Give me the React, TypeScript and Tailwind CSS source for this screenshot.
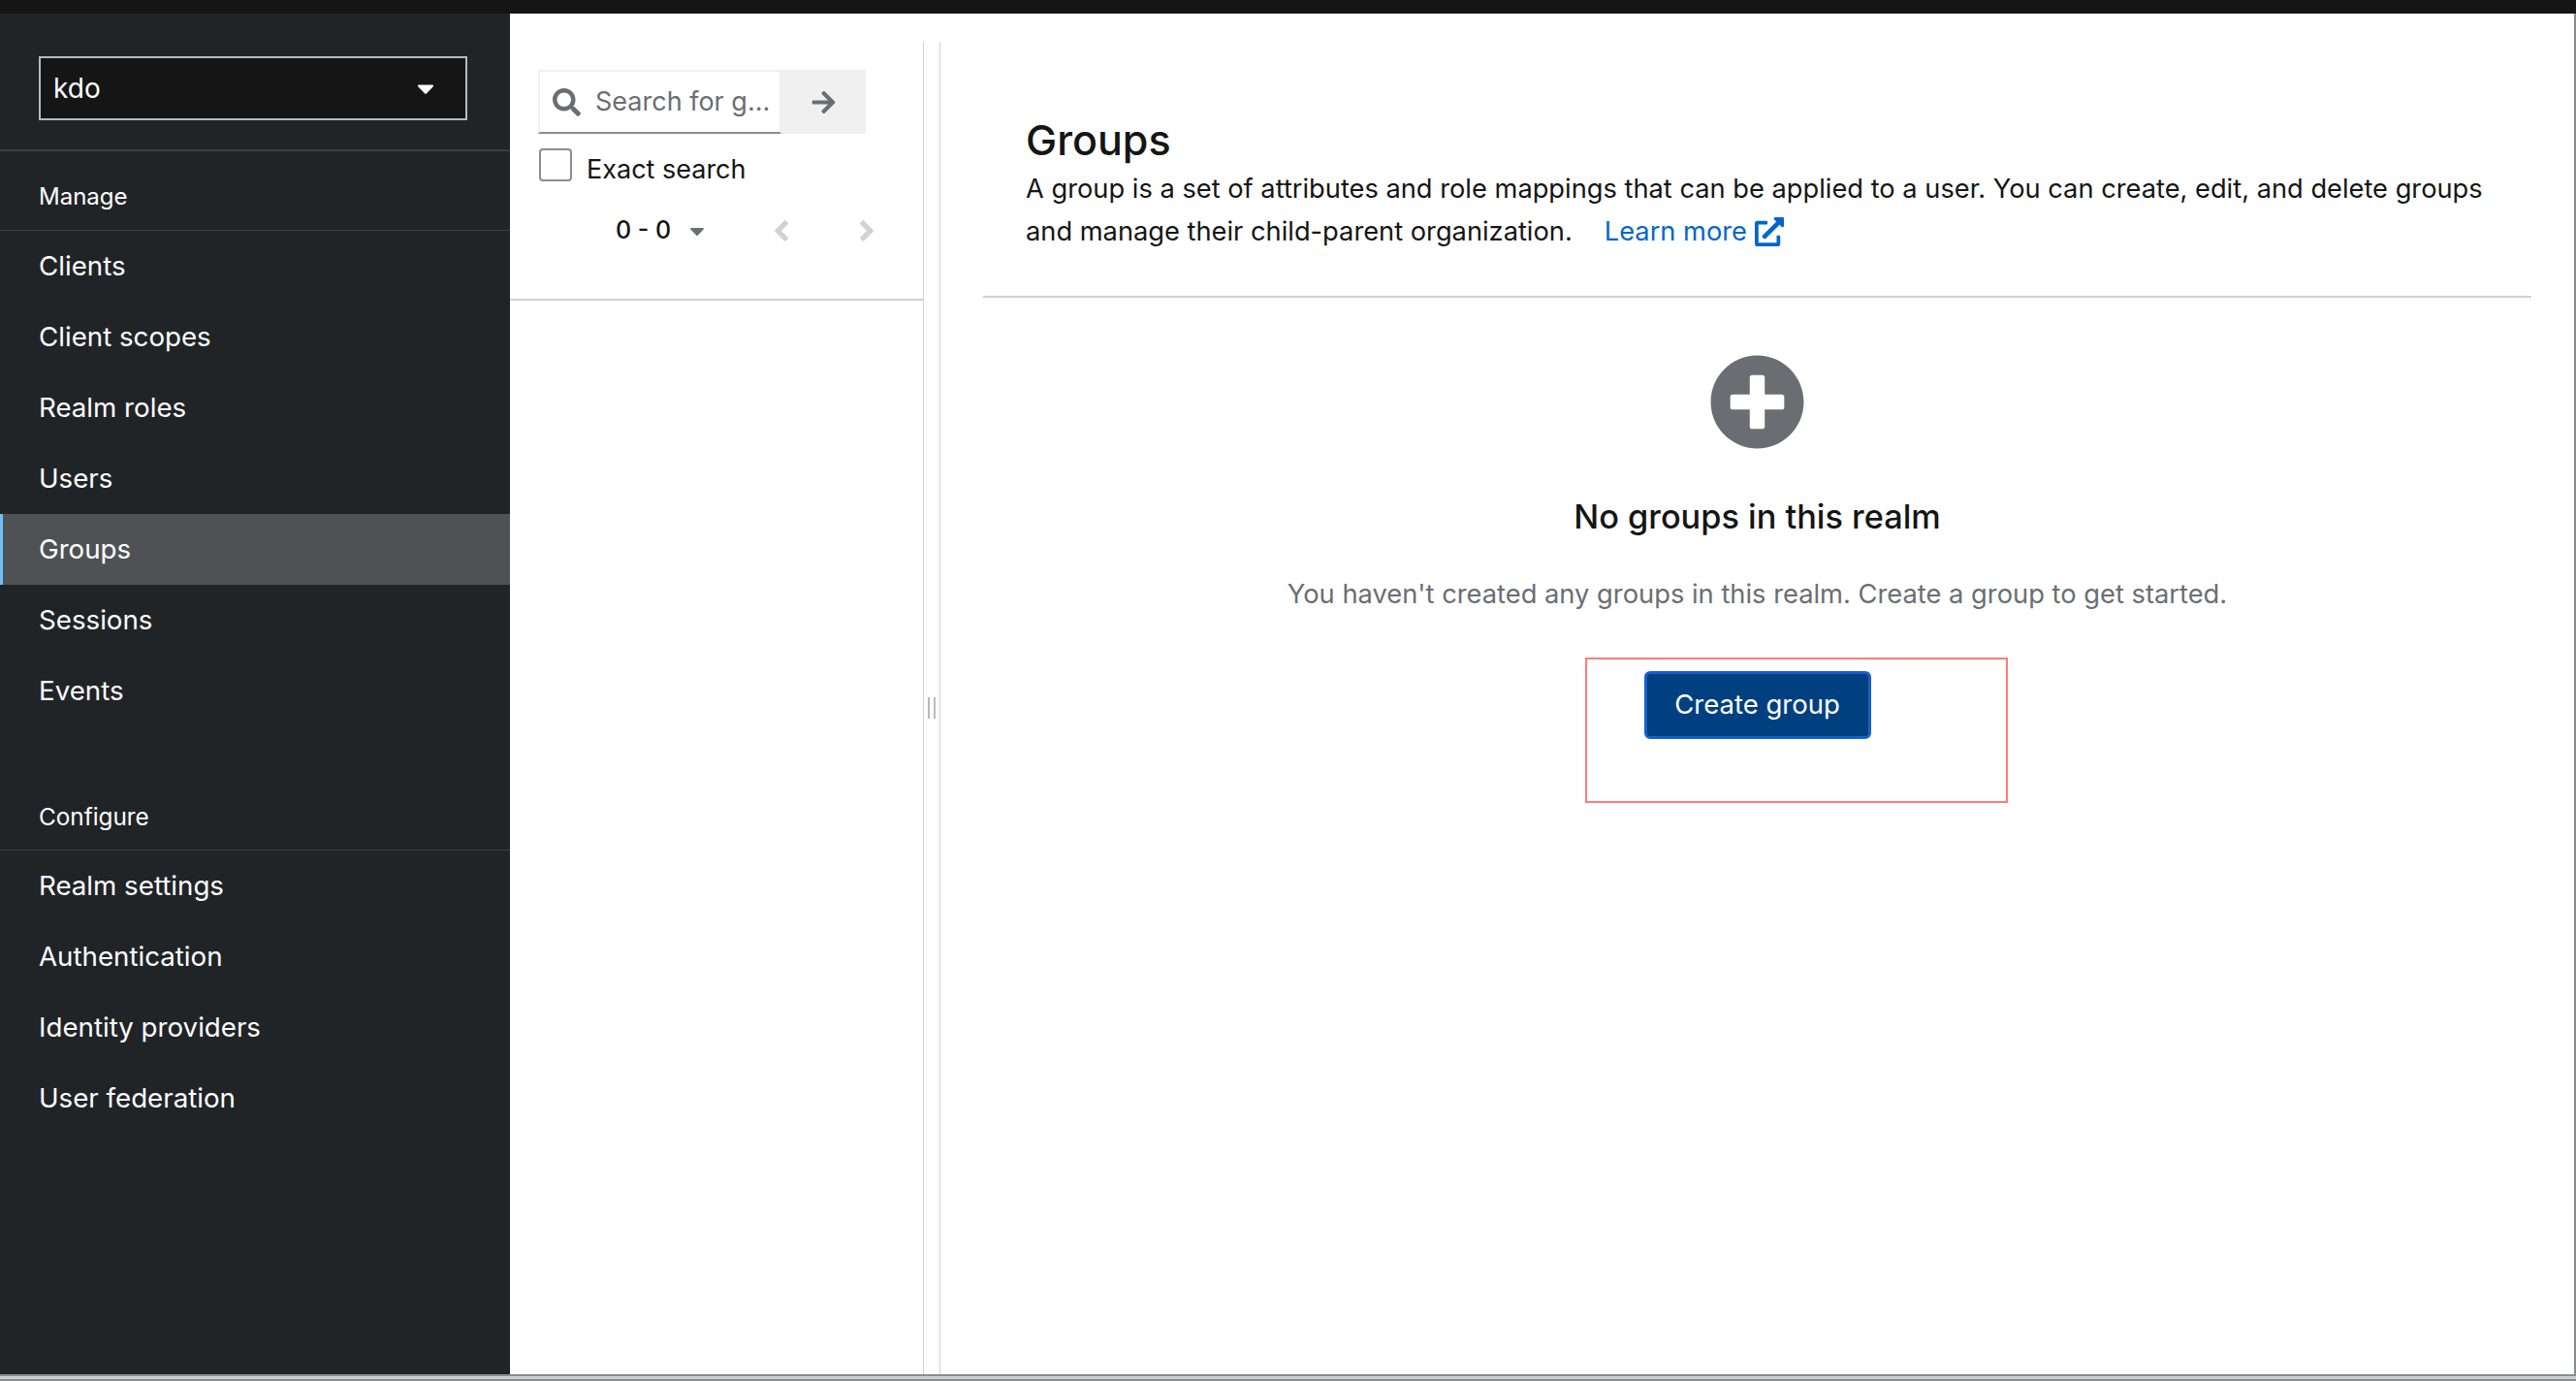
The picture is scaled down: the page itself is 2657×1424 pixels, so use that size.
import { FaAngleLeft, FaAngleRight, FaArrowRight, FaCaretDown, FaExternalLinkAlt, FaPlusCircle, FaSearch } from "react-icons/fa";

const MANAGE = ["Clients", "Client scopes", "Realm roles", "Users", "Groups", "Sessions", "Events"];
const CONFIGURE = ["Realm settings", "Authentication", "Identity providers", "User federation"];

function NavItem({ label }: { label: string }) {
  const active = label === "Groups";
  return (
    <div
      className={`flex h-[73px] items-center pt-px text-[27.7px] text-white ${
        active ? "border-l-[3px] border-[#73bcf7] bg-[#4f5255] pl-[37px]" : "pl-[40px]"
      }`}
    >
      {label}
    </div>
  );
}

function Sidebar() {
  return (
    <aside className="w-[526px] shrink-0 bg-[#212427] text-white">
      {/* Realm selector */}
      <div className="border-b-2 border-[#3c3f42] px-[40px] pt-[44px] pb-[30px]">
        <div className="flex h-[66px] w-[442px] items-center justify-between border-2 border-[#b8bbbe] bg-[#151515] pr-[34px] pl-[13px] text-[28px]">
          <span>kdo</span>
          <FaCaretDown className="-mr-[7px] text-[28px]" />
        </div>
      </div>

      <div className="border-b border-[#3c3f42] pt-[29px] pb-[16px] pl-[40px] text-[24px] leading-[36px]">Manage</div>
      {MANAGE.map((m) => (
        <NavItem key={m} label={m} />
      ))}

      <div className="mt-[75px] border-b border-[#3c3f42] pb-[16px] pl-[40px] text-[24.3px] leading-[36px]">Configure</div>
      {CONFIGURE.map((m) => (
        <NavItem key={m} label={m} />
      ))}
    </aside>
  );
}

function TreePanel() {
  return (
    <div className="w-[426px] shrink-0">
      <div className="h-[296px] border-b-2 border-[#d2d2d2] pt-[58px] pl-[29px]">
        {/* Search */}
        <div className="flex h-[66px] w-[338px]">
          <div className="flex w-[251px] items-center gap-[15px] border-2 border-[#f0f0f0] border-b-[#8a8d90] pl-[13px] text-[27px] text-[#6a6e73]">
            <FaSearch className="shrink-0 text-[29px]" />
            <span className="whitespace-nowrap">Search for g...</span>
          </div>
          <div className="flex w-[87px] items-center justify-center bg-[#f0f0f0] text-[#6a6e73]">
            <FaArrowRight className="text-[27px]" />
          </div>
        </div>

        <div className="mt-[15px] flex items-start gap-[15px] pl-px">
          <div className="h-[34px] w-[34px] rounded-[4px] border-2 border-[#8a8d90]" />
          <span className="mt-[2px] text-[27px] leading-[40px] text-[#151515]">Exact search</span>
        </div>

        {/* Pagination */}
        <div className="mt-[23px] flex h-[40px] items-center pl-[80px] text-[#151515]">
          <span className="w-[72px] text-[25px] font-medium">0 - 0</span>
          <FaCaretDown className="text-[24px] text-[#6a6e73]" />
          <FaAngleLeft className="ml-[58px] text-[34px] text-[#d2d2d2]" />
          <FaAngleRight className="ml-[54px] text-[34px] text-[#d2d2d2]" />
        </div>
      </div>
    </div>
  );
}

function Splitter() {
  return (
    <div className="mt-[29px] flex w-[18px] shrink-0 items-center justify-center gap-[4px] border-x border-[#d2d2d2]">
      <div className="h-[22px] w-[2px] bg-[#b8bbbe]" />
      <div className="h-[22px] w-[2px] bg-[#b8bbbe]" />
    </div>
  );
}

function GroupsSection() {
  return (
    <main className="min-w-0 flex-1 px-[44px]">
      <div className="h-[293px] border-b-2 border-[#d2d2d2] pt-[108px] pl-[44px] text-[#151515]">
        <h1 className="mb-[7px] text-[43px] leading-[44px] font-medium">Groups</h1>
        <p className="text-[27.25px] leading-[44px] whitespace-nowrap">
          A group is a set of attributes and role mappings that can be applied to a user. You can create, edit, and delete groups
          <br />
          and manage their child-parent organization.
          <a className="ml-[33px] inline-flex items-center gap-[8px] text-[#0066cc]">
            Learn more
            <FaExternalLinkAlt className="text-[30px]" />
          </a>
        </p>
      </div>

      {/* Empty state */}
      <div className="flex flex-col items-center pt-[58px]">
        <FaPlusCircle className="text-[99px] text-[#6a6e73]" />
        <h2 className="mt-[44px] text-[34.3px] leading-[50px] font-medium text-[#151515]">No groups in this realm</h2>
        <p className="mt-[35px] text-[27.3px] leading-[40px] text-[#6a6e73]">
          You haven't created any groups in this realm. Create a group to get started.
        </p>
        <div className="relative mt-[59px]">
          <button className="flex h-[70px] w-[234px] items-center justify-center rounded-[6px] border-[3px] border-[#1560d0] bg-[#004080] text-[27.5px] text-white">
            Create group
          </button>
          <div className="absolute top-[-14px] left-[-61px] h-[150px] w-[436px] border-2 border-[#ff7b7b]" />
        </div>
      </div>
    </main>
  );
}

export default function App() {
  return (
    <div className="flex h-screen flex-col overflow-hidden bg-white font-['Inter',sans-serif]">
      <div className="h-[14px] shrink-0 bg-[#151515]" />
      <div className="flex min-h-0 flex-1 border-r-2 border-[#8a8d90]">
        <Sidebar />
        <TreePanel />
        <Splitter />
        <GroupsSection />
      </div>
      <div className="h-[7px] shrink-0 border-y-2 border-[#8a8d90] bg-[#cfcfcf]" />
    </div>
  );
}
